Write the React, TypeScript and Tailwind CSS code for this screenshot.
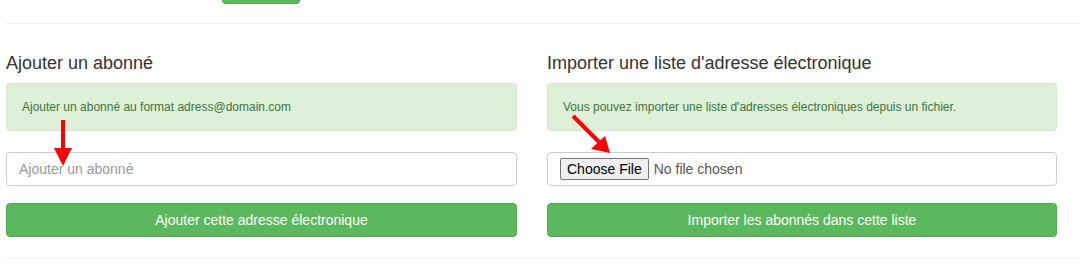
import React from "react";

const font = { fontFamily: '"Liberation Sans", Arial, sans-serif' };

function Arrows() {
  return (
    <svg className="pointer-events-none absolute left-0 top-0" width="1080" height="273">
      <rect x="61" y="120" width="4" height="30" fill="#ff0000" />
      <polygon points="54,148 72,148 63,166" fill="#ff0000" />
      <line x1="573" y1="116" x2="599" y2="142" stroke="#ff0000" strokeWidth="4" />
      <polygon points="605,136 591,149 610,153" fill="#ff0000" />
    </svg>
  );
}

export default function App() {
  return (
    <div className="relative h-[273px] w-[1080px] overflow-hidden bg-white" style={font}>
      <div className="ml-[222px] h-[4px] w-[78px] rounded-b-[4px] border border-t-0 border-[#4cae4c] bg-[#5cb85c]" />
      <div className="ml-[6px] mt-[19px] border-t border-[#eee]" />

      <div className="flex gap-[30px] pl-[6px] pt-[29px]">
        <div className="w-[511px]">
          <h4 className="mb-[10px] text-[18px] leading-[20px] text-[#333]">Ajouter un abonné</h4>
          <div className="rounded-[4px] border border-[#d6e9c6] bg-[#dff0d8] px-[15px] py-[14px] text-[12px] leading-[18px] text-[#3c763d]">
            Ajouter un abonné au format adress@domain.com
          </div>
          <div className="mt-[21px] flex h-[34px] items-center rounded-[4px] border border-[#ccc] px-[12px] text-[14px] text-[#999]">
            Ajouter un abonné
          </div>
          <button className="mt-[17px] h-[34px] w-full rounded-[4px] border border-[#4cae4c] bg-[#5cb85c] text-[14px] text-white">
            Ajouter cette adresse électronique
          </button>
        </div>

        <div className="w-[510px]">
          <h4 className="mb-[10px] text-[18px] leading-[20px] text-[#333]">Importer une liste d'adresse électronique</h4>
          <div className="rounded-[4px] border border-[#d6e9c6] bg-[#dff0d8] px-[15px] py-[14px] text-[12px] leading-[18px] text-[#3c763d]">
            Vous pouvez importer une liste d'adresses électroniques depuis un fichier.
          </div>
          <div className="mt-[21px] flex h-[34px] items-center gap-[5px] rounded-[4px] border border-[#ccc] px-[12px] text-[14px] text-[#555]">
            <span className="flex h-[22px] items-center rounded-[2px] border border-[#767676] bg-[#efefef] px-[6px] text-black">
              Choose File
            </span>
            <span>No file chosen</span>
          </div>
          <button className="mt-[17px] h-[34px] w-full rounded-[4px] border border-[#4cae4c] bg-[#5cb85c] text-[14px] text-white">
            Importer les abonnés dans cette liste
          </button>
        </div>
      </div>

      <div className="ml-[6px] mt-[21px] border-t border-[#eee]" />
      <Arrows />
    </div>
  );
}
